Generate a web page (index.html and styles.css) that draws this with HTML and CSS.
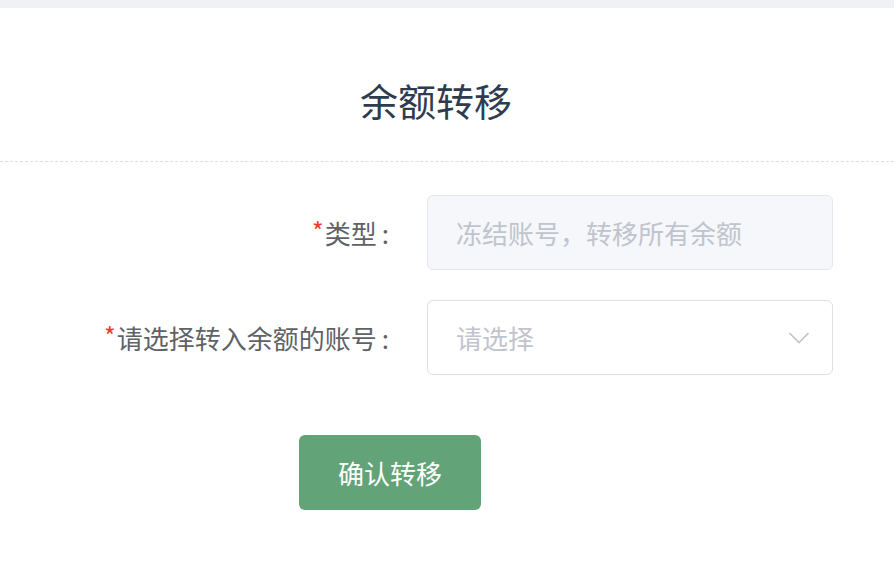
FILE: index.html
```html
<!DOCTYPE html>
<html lang="zh-CN">
<head>
    <meta charset="UTF-8">
    <meta name="viewport" content="width=device-width, initial-scale=1.0">
    <title>余额转移</title>
    <link rel="stylesheet" href="styles.css">
</head>
<body>
    <div class="top-bar"></div>
    <div class="header">
        <h1 class="title">余额转移</h1>
    </div>
    <div class="form">
        <label class="form-label"><span class="required">*</span>类型<span class="colon">:</span></label>
        <div class="form-input disabled">冻结账号，转移所有余额</div>

        <label class="form-label"><span class="required">*</span>请选择转入余额的账号<span class="colon">:</span></label>
        <div class="form-input select">
            <span class="placeholder">请选择</span>
            <svg class="arrow" width="22" height="14" viewBox="0 0 22 14">
                <path d="M1.5 2 L11 11.5 L20.5 2" fill="none" stroke="#c0c4cc" stroke-width="1.6"/>
            </svg>
        </div>
    </div>
    <div class="actions">
        <button class="submit-btn">确认转移</button>
    </div>
</body>
</html>
```

FILE: styles.css
```css
body {
    margin: 0;
    background-color: #fff;
    font-family: "Noto Sans CJK SC", "Noto Sans", sans-serif;
}

.top-bar {
    height: 8px;
    background-color: #f0f1f5;
}

.header {
    padding: 65px 22px 34px 0;
    border-bottom: 1px dashed #dcdfe6;
    text-align: center;
}

.title {
    margin: 0;
    font-size: 38px;
    line-height: 54px;
    font-weight: normal;
    color: #2f3b4e;
}

.form {
    display: grid;
    grid-template-columns: 389px 406px;
    column-gap: 38px;
    row-gap: 30px;
    margin-top: 33px;
}

.form-label {
    display: flex;
    align-items: center;
    justify-content: flex-end;
    font-size: 26px;
    color: #606266;
}

.required {
    color: #f5392d;
    font-size: 25px;
    margin-right: 1px;
    position: relative;
    top: -3px;
}

.colon {
    margin-left: 5px;
}

.form-input {
    box-sizing: border-box;
    height: 75px;
    display: flex;
    align-items: center;
    justify-content: space-between;
    padding: 0 22px 0 28px;
    border: 1px solid #dcdfe6;
    border-radius: 6px;
    font-size: 26px;
    color: #c0c4cc;
}

.form-input.disabled {
    background-color: #f5f7fa;
    border-color: #e4e7ed;
}

.arrow {
    display: block;
}

.actions {
    margin-top: 60px;
    padding-left: 299px;
}

.submit-btn {
    width: 182px;
    height: 75px;
    border: none;
    border-radius: 6px;
    background-color: #63a378;
    color: #fff;
    font-family: inherit;
    font-size: 26px;
    cursor: pointer;
}
```
